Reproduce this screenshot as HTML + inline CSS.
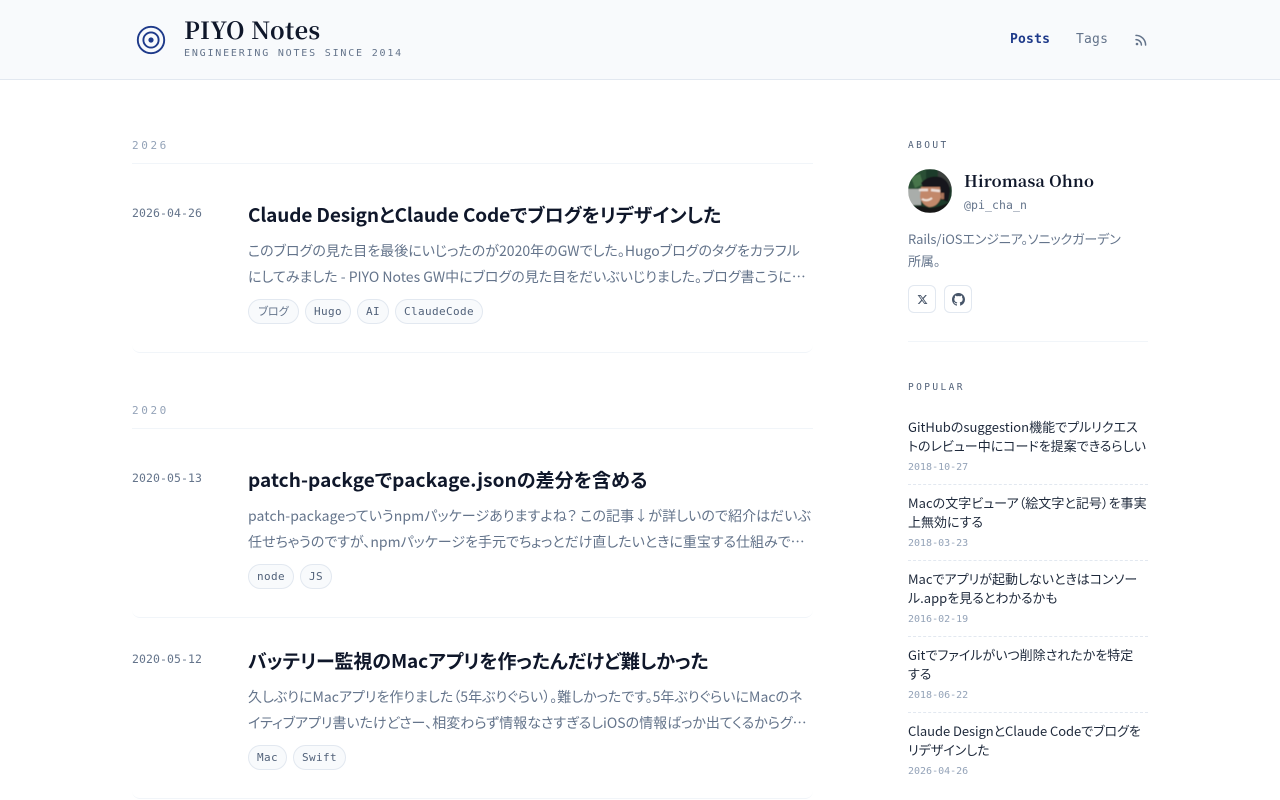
<!DOCTYPE html>
<html lang="ja"><head><meta charset="utf-8"><title>PIYO Notes</title>
<style>
*{box-sizing:border-box;margin:0;padding:0}
html,body{width:1280px;height:800px;overflow:hidden;background:#fff}
body{position:relative;font-family:"Liberation Sans","Noto Sans CJK JP",sans-serif;font-feature-settings:"palt";color:#0f172a}
body *{font-family:"Noto Sans CJK JP",sans-serif}
.a{position:absolute;white-space:nowrap}
.m,.m *{font-family:"DejaVu Sans Mono","Liberation Mono",monospace;font-feature-settings:normal}
.s{font-family:"Noto Serif CJK SC",serif}
header{position:absolute;left:0;top:0;width:1280px;height:80px;background:#f8fafc;border-bottom:1px solid #e2e8f0}
.year{left:132px;font-size:11px;line-height:16px;letter-spacing:2.6px;color:#94a3b8}
.hr{position:absolute;left:132px;width:681px;height:1px;background:#f1f5f9}
.date{left:132px;font-size:11.5px;line-height:16px;letter-spacing:.08px;color:#64748b}
.t{left:248px;font-size:19px;line-height:28px;font-weight:700;color:#0f172a}
.d{left:248px;width:565px;font-size:14px;line-height:26px;color:#64748b;overflow:hidden}
.tag{position:absolute;height:25px;border:1px solid #e2e8f0;border-radius:13px;background:#f8fafc;font-size:11px;line-height:23px;text-align:center;color:#64748b;white-space:nowrap}
.tag.m{font-size:11px;letter-spacing:.37px;line-height:23px;color:#52627a}
.card{position:absolute;left:132px;width:681px;height:12px;border-bottom:1px solid #f1f5f9;border-radius:0 0 8px 8px}
.lab{left:908px;font-size:9.5px;line-height:14px;letter-spacing:2.4px;color:#52627a}
.pt{left:908px;width:240px;font-size:13px;line-height:19px;color:#1e293b}
.pd{left:908px;font-size:10px;line-height:14px;color:#94a3b8}
.dash{position:absolute;left:908px;width:240px;height:0;border-top:1px dashed #e2e8f0}
.btn{position:absolute;top:285px;width:28px;height:28px;border:1px solid #e2e8f0;border-radius:6px;background:#fff}
.btn svg{position:absolute}
</style></head><body>
<header>
<svg class="a" style="left:136px;top:25px" width="30" height="30" viewBox="0 0 30 30" fill="none"><circle cx="15" cy="15" r="13.2" stroke="#1e3a8a" stroke-width="1.9"/><circle cx="15" cy="15" r="7.6" stroke="#1e3a8a" stroke-width="1.9"/><circle cx="15" cy="15" r="2.6" fill="#1e3a8a"/></svg>
<div class="a s" style="left:184px;top:12px;font-size:23.5px;line-height:34px;font-weight:700;letter-spacing:.4px;color:#0f172a">PIYO Notes</div>
<div class="a m" style="left:184px;top:47px;font-size:10px;line-height:14px;letter-spacing:1.8px;color:#64748b">ENGINEERING NOTES SINCE 2014</div>
<div class="a m" style="left:1010px;top:31px;font-size:13px;line-height:18px;font-weight:700;color:#1e3a8a;letter-spacing:.2px">Posts</div>
<div class="a m" style="left:1076px;top:31px;font-size:13px;line-height:18px;color:#64748b;letter-spacing:.2px">Tags</div>
<svg class="a" style="left:1134px;top:33px" width="14" height="14" viewBox="0 0 14 14" fill="none" stroke="#64748b" stroke-width="1.5" stroke-linecap="round"><path d="M2 6.6a5.4 5.4 0 0 1 5.4 5.4M2 2.4A9.6 9.6 0 0 1 11.6 12"/><circle cx="3" cy="11" r="1.3" fill="#64748b" stroke="none"/></svg>
</header>

<div class="a m year" style="top:138px">2026</div><div class="hr" style="top:163px"></div>
<div class="a m date" style="top:205px">2026-04-26</div>
<div class="a t" style="top:201px;letter-spacing:-.14px">Claude DesignとClaude Codeでブログをリデザインした</div>
<div class="a d" style="top:238px"><span style="letter-spacing:.02px">このブログの見た目を最後にいじったのが2020年のGWでした。Hugoブログのタグをカラフル</span><br>にしてみました - PIYO Notes GW中にブログの見た目をだいぶいじりました。ブログ書こうに…</div>
<div class="tag" style="left:248px;top:299px;width:51px">ブログ</div>
<div class="tag m" style="left:305px;top:299px;width:46px">Hugo</div>
<div class="tag m" style="left:357px;top:299px;width:32px">AI</div>
<div class="tag m" style="left:395px;top:299px;width:88px">ClaudeCode</div>
<div class="card" style="top:341px"></div>

<div class="a m year" style="top:403px">2020</div><div class="hr" style="top:428px"></div>
<div class="a m date" style="top:470px">2020-05-13</div>
<div class="a t" style="top:466px;letter-spacing:.06px">patch-packgeでpackage.jsonの差分を含める</div>
<div class="a d" style="top:503px"><span style="letter-spacing:.09px">patch-packageっていうnpmパッケージありますよね？ この記事↓が詳しいので紹介はだいぶ</span><br>任せちゃうのですが、npmパッケージを手元でちょっとだけ直したいときに重宝する仕組みで…</div>
<div class="tag m" style="left:248px;top:564px;width:46px">node</div>
<div class="tag m" style="left:300px;top:564px;width:32px">JS</div>
<div class="card" style="top:606px"></div>

<div class="a m date" style="top:651px">2020-05-12</div>
<div class="a t" style="top:647px;letter-spacing:-.11px">バッテリー監視のMacアプリを作ったんだけど難しかった</div>
<div class="a d" style="top:684px"><span style="letter-spacing:.03px">久しぶりにMacアプリを作りました（5年ぶりぐらい）。難しかったです。5年ぶりぐらいにMacのネ</span><br>イティブアプリ書いたけどさー、相変わらず情報なさすぎるしiOSの情報ばっか出てくるからグ…</div>
<div class="tag m" style="left:248px;top:745px;width:39px">Mac</div>
<div class="tag m" style="left:293px;top:745px;width:53px">Swift</div>
<div class="card" style="top:787px"></div>

<div class="a m lab" style="top:139px">ABOUT</div>
<svg class="a" style="left:908px;top:169px" width="44" height="44" viewBox="0 0 44 44"><defs><clipPath id="c"><circle cx="22" cy="22" r="22"/></clipPath><filter id="b"><feGaussianBlur stdDeviation=".6"/></filter></defs><g clip-path="url(#c)"><g filter="url(#b)"><rect width="44" height="44" fill="#1f3a2b"/><path d="M0 0h18v20H0z" fill="#2a4f34"/><path d="M3 8l9-3 3 10-8 4z" fill="#47744c"/><path d="M0 20h13v16H0z" fill="#a9adaa"/><path d="M30 0h14v18H30z" fill="#3a3f3c"/><path d="M13 14Q20 6 32 8 41 11 42 22L40 33 33 30 31 18 15 18z" fill="#16171a"/><path d="M13 18H32L33 28Q30 38 21 38 14 36 12 28z" fill="#c2886a"/><path d="M33 24h3v6h-3z" fill="#a8735a"/><path d="M11 21h9M23 21l9 1" stroke="#ecdfd9" stroke-width="2.6"/><path d="M14 30Q19 33 24 29" stroke="#f1e2d8" stroke-width="2" fill="none"/><path d="M0 40Q12 35 21 39 30 39 44 32V44H0z" fill="#141416"/></g></g></svg>
<div class="a s" style="left:964px;top:168px;font-size:16px;line-height:25px;font-weight:700;letter-spacing:.15px;color:#0f172a">Hiromasa Ohno</div>
<div class="a m" style="left:964px;top:198px;font-size:11.5px;line-height:15px;letter-spacing:.08px;color:#64748b">@pi_cha_n</div>
<div class="a" style="left:908px;top:228px;font-size:13px;line-height:22px;letter-spacing:-.1px;color:#64748b">Rails/iOSエンジニア。ソニックガーデン<br>所属。</div>
<div class="btn" style="left:908px"><svg style="left:8px;top:8px" width="11" height="11" viewBox="0 0 24 24" fill="#475569"><path d="M18.2 2.3h3.3l-7.2 8.2L22.8 21.7h-6.6l-5.2-6.8-6 6.8H1.7l7.7-8.8L1.3 2.3H8l4.7 6.2zm-1.2 17.5h1.8L7.1 4.1H5.1z"/></svg></div>
<div class="btn" style="left:944px"><svg style="left:7px;top:7px" width="13" height="13" viewBox="0 0 16 16" fill="#475569"><path d="M8 0C3.58 0 0 3.58 0 8c0 3.54 2.29 6.53 5.47 7.59.4.07.55-.17.55-.38 0-.19-.01-.82-.01-1.49-2.01.37-2.53-.49-2.69-.94-.09-.23-.48-.94-.82-1.13-.28-.15-.68-.52-.01-.53.63-.01 1.08.58 1.23.82.72 1.21 1.87.87 2.33.66.07-.52.28-.87.51-1.07-1.78-.2-3.64-.89-3.64-3.95 0-.87.31-1.59.82-2.15-.08-.2-.36-1.02.08-2.12 0 0 .67-.21 2.2.82.64-.18 1.32-.27 2-.27s1.36.09 2 .27c1.53-1.04 2.2-.82 2.2-.82.44 1.1.16 1.92.08 2.12.51.56.82 1.27.82 2.15 0 3.07-1.87 3.75-3.65 3.95.29.25.54.73.54 1.48 0 1.07-.01 1.93-.01 2.2 0 .21.15.46.55.38A8 8 0 0 0 16 8c0-4.42-3.58-8-8-8z"/></svg></div>
<div class="hr" style="left:908px;width:240px;top:341px"></div>

<div class="a m lab" style="top:381px">POPULAR</div>
<div class="a pt" style="top:417px">GitHubのsuggestion機能でプルリクエス<br>トのレビュー中にコードを提案できるらしい</div>
<div class="a m pd" style="top:461px">2018-10-27</div><div class="dash" style="top:484px"></div>
<div class="a pt" style="top:493px"><span style="letter-spacing:.04px">Macの文字ビューア（絵文字と記号）を事実</span><br>上無効にする</div>
<div class="a m pd" style="top:537px">2018-03-23</div><div class="dash" style="top:560px"></div>
<div class="a pt" style="top:569px">Macでアプリが起動しないときはコンソー<br>ル.appを見るとわかるかも</div>
<div class="a m pd" style="top:613px">2016-02-19</div><div class="dash" style="top:636px"></div>
<div class="a pt" style="top:645px">Gitでファイルがいつ削除されたかを特定<br>する</div>
<div class="a m pd" style="top:689px">2018-06-22</div><div class="dash" style="top:712px"></div>
<div class="a pt" style="top:721px"><span style="letter-spacing:-.06px">Claude DesignとClaude Codeでブログを</span><br>リデザインした</div>
<div class="a m pd" style="top:765px">2026-04-26</div>
</body></html>
